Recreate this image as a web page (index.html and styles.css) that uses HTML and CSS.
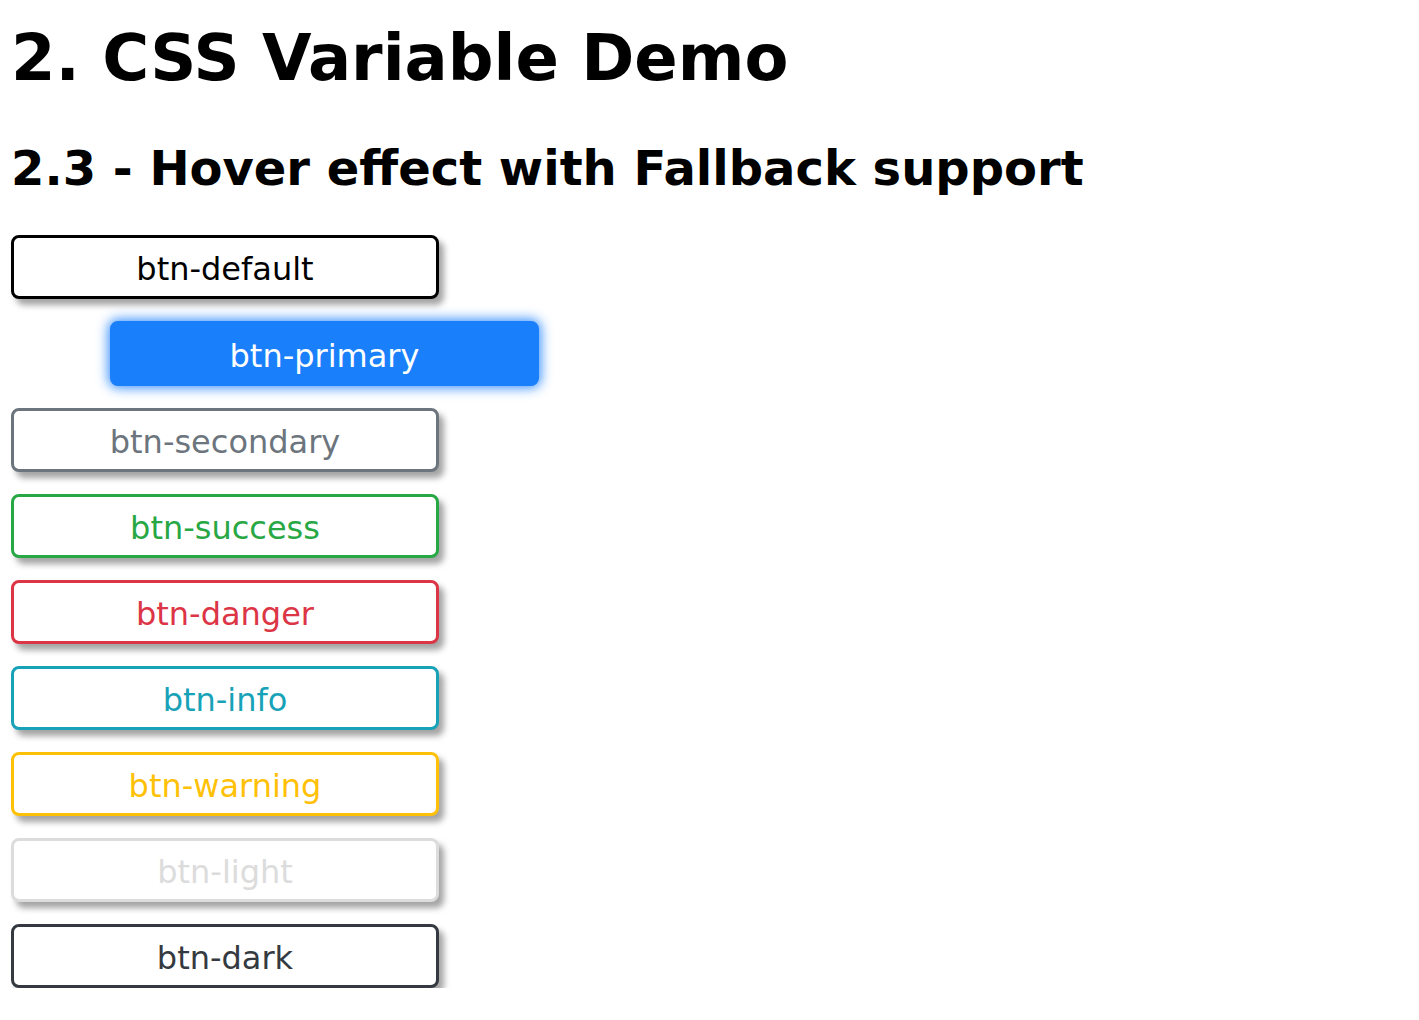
FILE: index.html
```html
<!DOCTYPE html>
<html>
<head>
<meta charset="utf-8">
<link rel="stylesheet" href="styles.css">
</head>
<body>
<h1 class="title">2. CSS Variable Demo</h1>
<h2 class="subtitle">2.3 - Hover effect with Fallback support</h2>
<div class="buttons">
  <button class="btn btn-default">btn-default</button>
  <button class="btn btn-primary">btn-primary</button>
  <button class="btn btn-secondary">btn-secondary</button>
  <button class="btn btn-success">btn-success</button>
  <button class="btn btn-danger">btn-danger</button>
  <button class="btn btn-info">btn-info</button>
  <button class="btn btn-warning">btn-warning</button>
  <button class="btn btn-light">btn-light</button>
  <button class="btn btn-dark">btn-dark</button>
</div>
</body>
</html>
```

FILE: styles.css
```css
html, body {
  margin: 0;
  background: #fff;
}
body {
  padding: 0 11px;
  font-family: "DejaVu Sans", Verdana, sans-serif;
}
.title {
  margin: 20px 0 0;
  font-size: 64px;
  line-height: 76px;
  font-weight: bold;
  color: #000;
}
.subtitle {
  margin: 44px 0 39px;
  font-size: 48px;
  line-height: 56px;
  font-weight: bold;
  color: #000;
}
.buttons {
  display: flex;
  flex-direction: column;
  align-items: flex-start;
  gap: 22px;
}
.btn {
  --c: #000;
  box-sizing: border-box;
  width: 428px;
  height: 64px;
  padding: 4px 0 0;
  border: 3px solid var(--c);
  border-radius: 8px;
  background: #fff;
  color: var(--c);
  font-family: "DejaVu Sans", Verdana, sans-serif;
  font-size: 32px;
  line-height: 54px;
  text-align: center;
  box-shadow: 5px 6px 6px rgba(0, 0, 0, 0.36);
}
.btn-default { --c: #000; }
.btn-primary {
  --c: #1a7ffb;
  background: #1a7ffb;
  color: #fff;
  transform: translateX(99px);
  box-shadow: 0 0 12px 2px rgba(26, 127, 251, 0.85);
  height: 65px;
  width: 429px;
}
.btn-secondary { --c: #6c757d; }
.btn-success { --c: #28a745; }
.btn-danger { --c: #dc3545; }
.btn-info { --c: #17a2b8; }
.btn-warning { --c: #ffc107; }
.btn-light { --c: #dcdcdc; }
.btn-dark { --c: #343a40; }
```
